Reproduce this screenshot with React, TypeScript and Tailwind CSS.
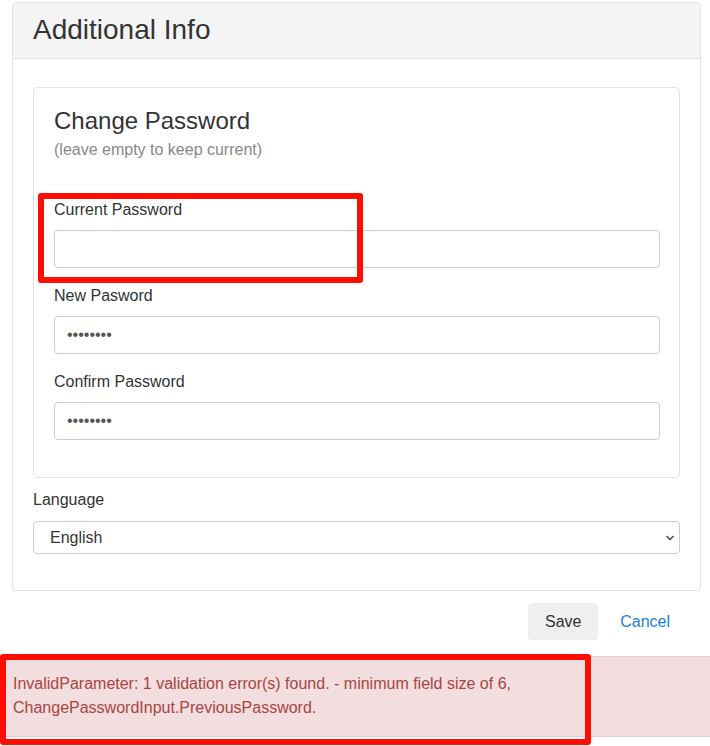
import { ChevronDown } from 'lucide-react';

const Field = ({ label, value }: { label: string; value?: string }) => (
  <div className="mb-[16px]">
    <label className="block text-[16px] leading-[24px] mb-[8px]">{label}</label>
    <input
      type="password"
      defaultValue={value}
      readOnly
      className="block w-full h-[38px] px-[12px] border border-[#ccc] rounded-[4px] text-[16px] text-[#555] bg-white outline-none"
    />
  </div>
);

const App = () => {
  return (
    <div className="relative w-[710px] h-[746px] bg-white text-[#333] font-['Liberation_Sans',Arial,sans-serif] pt-[2px] overflow-hidden">
      <div className="ml-[12px] w-[689px] border border-[#e3e3e3] rounded-[4px]">
        <div className="h-[56px] bg-[#f4f4f4] border-b border-[#e3e3e3] px-[20px] flex items-center rounded-t-[4px]">
          <h3 className="text-[28px] leading-[31px] text-[#333] mb-[3px]">Additional Info</h3>
        </div>

        <div className="px-[20px] pt-[28px] pb-[21px]">
          <div className="border border-[#e3e3e3] rounded-[4px] pl-[20px] pr-[19px] pt-[18px] pb-[21px]">
            <h4 className="text-[24px] leading-[29px]">Change Password</h4>
            <p className="text-[16px] leading-[24px] text-[#888] mt-[3px]">(leave empty to keep current)</p>

            <div className="mt-[36px]">
              <Field label="Current Password" />
              <Field label="New Pasword" value="12345678" />
              <Field label="Confirm Password" value="12345678" />
            </div>
          </div>

          <div className="mt-[10px] mb-[15px]">
            <label className="block text-[16px] leading-[24px] mb-[9px]">Language</label>
            <div className="relative">
              <select className="block w-full h-[33px] pl-[16px] pr-[30px] border border-[#ccc] rounded-[4px] text-[16px] text-[#333] bg-white appearance-none outline-none">
                <option>English</option>
              </select>
              <ChevronDown
                className="absolute right-[4px] top-[11px] w-[12px] h-[12px] text-[#555] pointer-events-none"
                strokeWidth={3.5}
              />
            </div>
          </div>
        </div>
      </div>

      <div className="flex justify-end items-center gap-[22px] pr-[40px] mt-[12px]">
        <button className="w-[70px] h-[37px] bg-[#efefef] rounded-[4px] text-[16px] text-[#333]">Save</button>
        <button className="text-[16px] text-[#1a7fd9]">Cancel</button>
      </div>

      <div className="mt-[16px] bg-[#f2dede] border-t border-b border-[#ebccd1] px-[13px] pt-[15px] pb-[16px] text-[16px] leading-[24px] text-[#a94442]">
        InvalidParameter: 1 validation error(s) found. - minimum field size of 6, ChangePasswordInput.PreviousPassword.
      </div>

      {/* annotation boxes */}
      <div className="absolute left-[38px] top-[193px] w-[325px] h-[90px] border-[6px] border-[#ff0d00] rounded-[3px] pointer-events-none" />
      <div className="absolute left-0 top-[654px] w-[591px] h-[91px] border-[6px] border-[#ff0d00] rounded-[3px] pointer-events-none" />
    </div>
  );
};

export default App;
